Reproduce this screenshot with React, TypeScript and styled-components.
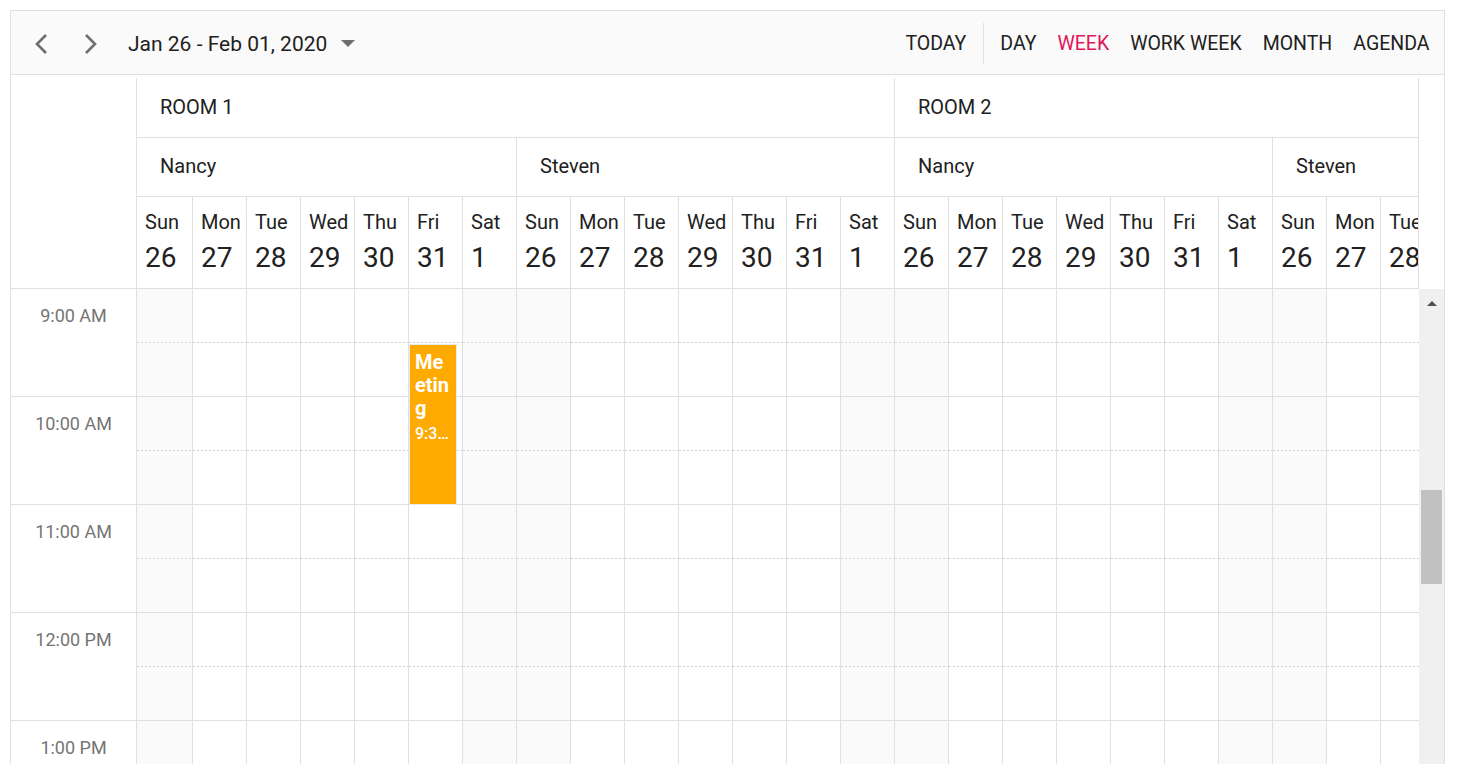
import React from "react";
import styled, { createGlobalStyle } from "styled-components";

const GlobalStyle = createGlobalStyle`
  html, body { margin: 0; padding: 0; overflow: hidden; background: #fff; }
  body { font-family: Roboto, "Liberation Sans", sans-serif; color: #212121; }
`;

const BORDER = "#e0e0e0";
const COLS = "56px repeat(27, 54px)";

const Page = styled.div`
  padding: 10px 0 0 10px;
  height: 764px;
  box-sizing: border-box;
`;

const Scheduler = styled.div`
  width: 1435px;
  height: 820px;
  box-sizing: border-box;
  border: 1px solid ${BORDER};
  display: flex;
  flex-direction: column;
  background: #fff;
`;

const Toolbar = styled.div`
  height: 64px;
  flex: none;
  box-sizing: border-box;
  border-bottom: 1px solid ${BORDER};
  background: #fafafa;
  display: flex;
  align-items: center;
  padding: 2px 4px 0 5px;
`;

const NavButton = styled.button`
  width: 50px;
  height: 50px;
  border: none;
  background: transparent;
  padding: 0;
  display: flex;
  align-items: center;
  justify-content: center;
  cursor: pointer;
`;

const DateRange = styled.div`
  margin-left: 12px;
  font-size: 21px;
  color: #212121;
  display: flex;
  align-items: center;
  gap: 14px;
`;

const Caret = styled.span`
  width: 0;
  height: 0;
  border-left: 7px solid transparent;
  border-right: 7px solid transparent;
  border-top: 7px solid #6e6e6e;
`;

const ViewGroup = styled.div`
  margin-left: auto;
  display: flex;
  align-items: center;
`;

const ViewButton = styled.button<{ $active?: boolean }>`
  border: none;
  background: transparent;
  padding: 0 10.5px;
  height: 40px;
  font-family: Roboto, "Liberation Sans", sans-serif;
  font-size: 19.5px;
  text-transform: uppercase;
  color: ${(p) => (p.$active ? "#e3165b" : "#212121")};
  cursor: pointer;
`;

const Separator = styled.div`
  width: 1px;
  height: 41px;
  background: ${BORDER};
  margin: 0 6px;
`;

const HeaderWrap = styled.div`
  display: flex;
  padding-top: 3px;
  flex: none;
`;

const HeaderCorner = styled.div`
  width: 125px;
  flex: none;
  box-sizing: border-box;
  border-bottom: 1px solid ${BORDER};
`;

const HeaderScroll = styled.div`
  width: 1283px;
  flex: none;
  box-sizing: border-box;
  overflow: hidden;
  border-right: 1px solid ${BORDER};
`;

const ScrollSpacer = styled.div`
  width: 25px;
  flex: none;
`;

const Grid = styled.div`
  display: grid;
  grid-template-columns: ${COLS};
  width: max-content;
  position: relative;
`;

const GroupCell = styled.div<{ $span: number; $h: number }>`
  grid-column: span ${(p) => p.$span};
  height: ${(p) => p.$h}px;
  box-sizing: border-box;
  border-left: 1px solid ${BORDER};
  border-bottom: 1px solid ${BORDER};
  display: flex;
  align-items: center;
  padding: 0 0 2px 23px;
  font-size: 20px;
  color: #212121;
  white-space: nowrap;
`;

const DateCell = styled.div`
  height: 92px;
  box-sizing: border-box;
  border-left: 1px solid ${BORDER};
  border-bottom: 1px solid ${BORDER};
  padding: 12px 0 0 8px;
  white-space: nowrap;
  overflow: hidden;
`;

const DayName = styled.div`
  font-size: 20px;
  line-height: 26px;
  color: #212121;
`;

const DayNum = styled.div`
  font-size: 28px;
  line-height: 45px;
  color: #212121;
`;

const Body = styled.div`
  display: flex;
  flex: 1;
  overflow: hidden;
`;

const TimeColumn = styled.div`
  width: 125px;
  flex: none;
`;

const TimeSlot = styled.div<{ $hourEnd: boolean }>`
  height: 54px;
  box-sizing: border-box;
  border-bottom: 1px solid ${(p) => (p.$hourEnd ? BORDER : "transparent")};
  display: flex;
  align-items: center;
  justify-content: center;
  padding-bottom: 1px;
  font-size: 18px;
  color: #757575;
`;

const ContentScroll = styled.div`
  width: 1283px;
  flex: none;
  overflow: hidden;
`;

const WorkCell = styled.div<{ $weekend: boolean; $hourEnd: boolean }>`
  height: 54px;
  box-sizing: border-box;
  border-left: 1px solid ${BORDER};
  background-color: ${(p) => (p.$weekend ? "#fafafa" : "#fff")};
  ${(p) =>
    p.$hourEnd
      ? `border-bottom: 1px solid ${BORDER};`
      : `background-image: linear-gradient(to right, #d2d2d2 50%, transparent 50%);
         background-size: 4px 1px;
         background-repeat: repeat-x;
         background-position: 0 100%;`}
`;

const Appointment = styled.div`
  position: absolute;
  box-sizing: border-box;
  border: 1px solid #e6ebf2;
  background: #ffaa00;
  color: #fff;
  padding: 6px 6px 0 5px;
  overflow: hidden;
`;

const ApptSubject = styled.div`
  font-size: 20px;
  line-height: 23px;
  font-weight: 700;
  word-break: break-all;
`;

const ApptTime = styled.div`
  margin-top: 4px;
  font-size: 16px;
  line-height: 20px;
  font-weight: 500;
  white-space: nowrap;
  overflow: hidden;
  text-overflow: ellipsis;
`;

const ScrollBar = styled.div`
  width: 25px;
  flex: none;
  background: #f0f0f0;
  display: flex;
  flex-direction: column;
`;

const ScrollArrow = styled.div`
  height: 28px;
  display: flex;
  align-items: center;
  justify-content: center;
  &::after {
    content: "";
    width: 0;
    height: 0;
    border-left: 5px solid transparent;
    border-right: 5px solid transparent;
    border-bottom: 5px solid #505050;
  }
`;

const ScrollThumb = styled.div`
  margin: 173px 2px 0 2px;
  height: 94px;
  background: #c1c1c1;
`;

const Chevron = ({ dir }: { dir: "left" | "right" }) => (
  <svg width="20" height="24" viewBox="0 0 20 24">
    <path
      d={dir === "left" ? "M15 3 L6 12 L15 21" : "M5 3 L14 12 L5 21"}
      fill="none"
      stroke="#6e6e6e"
      strokeWidth="2.6"
    />
  </svg>
);

const DAYS = [
  ["Sun", "26"],
  ["Mon", "27"],
  ["Tue", "28"],
  ["Wed", "29"],
  ["Thu", "30"],
  ["Fri", "31"],
  ["Sat", "1"],
];
const ROOMS = ["ROOM 1", "ROOM 2"];
const PEOPLE = ["Nancy", "Steven"];
const VIEWS = ["Day", "Week", "Work Week", "Month", "Agenda"];
const TIMES = ["9:00 AM", "10:00 AM", "11:00 AM", "12:00 PM", "1:00 PM"];

const columns = ROOMS.flatMap(() => PEOPLE.flatMap(() => DAYS.map((d, i) => ({ d, weekend: i === 0 || i === 6 }))));
const SLOTS = 10;

export default function App() {
  return (
    <>
      <GlobalStyle />
      <Page>
        <Scheduler>
          <Toolbar>
            <NavButton aria-label="Previous">
              <Chevron dir="left" />
            </NavButton>
            <NavButton aria-label="Next">
              <Chevron dir="right" />
            </NavButton>
            <DateRange>
              Jan 26 - Feb 01, 2020
              <Caret />
            </DateRange>
            <ViewGroup>
              <ViewButton>Today</ViewButton>
              <Separator />
              {VIEWS.map((v) => (
                <ViewButton key={v} $active={v === "Week"}>
                  {v}
                </ViewButton>
              ))}
            </ViewGroup>
          </Toolbar>

          <HeaderWrap>
            <HeaderCorner />
            <HeaderScroll>
              <Grid>
                {ROOMS.map((r) => (
                  <GroupCell key={r} $span={14} $h={60}>
                    {r}
                  </GroupCell>
                ))}
                {ROOMS.flatMap((r) =>
                  PEOPLE.map((p) => (
                    <GroupCell key={r + p} $span={7} $h={59}>
                      {p}
                    </GroupCell>
                  ))
                )}
                {columns.map((c, i) => (
                  <DateCell key={i}>
                    <DayName>{c.d[0]}</DayName>
                    <DayNum>{c.d[1]}</DayNum>
                  </DateCell>
                ))}
              </Grid>
            </HeaderScroll>
            <ScrollSpacer />
          </HeaderWrap>

          <Body>
            <TimeColumn>
              {TIMES.flatMap((t) => [
                <TimeSlot key={t + "a"} $hourEnd={false}>
                  {t}
                </TimeSlot>,
                <TimeSlot key={t + "b"} $hourEnd={true} />,
              ])}
            </TimeColumn>
            <ContentScroll>
              <Grid>
                {Array.from({ length: SLOTS }).flatMap((_, s) =>
                  columns.map((c, i) => (
                    <WorkCell key={s + "-" + i} $weekend={c.weekend} $hourEnd={s % 2 === 1} />
                  ))
                )}
                <Appointment style={{ left: 273, top: 55, width: 48, height: 161 }}>
                  <ApptSubject>Meeting</ApptSubject>
                  <ApptTime>9:30 AM - 11:00 AM</ApptTime>
                </Appointment>
              </Grid>
            </ContentScroll>
            <ScrollBar>
              <ScrollArrow />
              <ScrollThumb />
            </ScrollBar>
          </Body>
        </Scheduler>
      </Page>
    </>
  );
}
